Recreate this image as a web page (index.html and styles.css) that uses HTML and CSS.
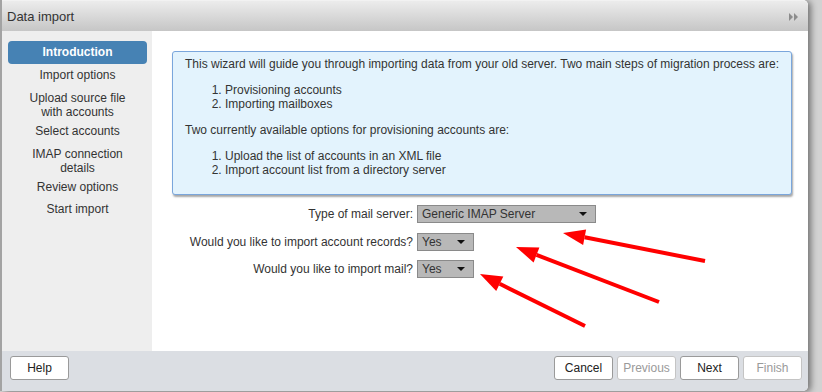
FILE: index.html
```html
<!DOCTYPE html>
<html>
<head>
<meta charset="utf-8">
<title>Data import</title>
<link rel="stylesheet" href="styles.css">
</head>
<body>
<div class="dialog">
  <div class="header">
    <span class="title">Data import</span>
    <svg class="collapse" width="9" height="8" viewBox="0 0 9 8"><path d="M0 0 L4 4 L0 8 Z M5 0 L9 4 L5 8 Z" fill="#8c8c8c"/></svg>
  </div>
  <div class="body">
    <nav class="steps">
      <div class="step active">Introduction</div>
      <div class="step">Import options</div>
      <div class="step two">Upload source file<br>with accounts</div>
      <div class="step">Select accounts</div>
      <div class="step two">IMAP connection<br>details</div>
      <div class="step">Review options</div>
      <div class="step">Start import</div>
    </nav>
    <main class="content">
      <div class="info">
        <p class="lead">This wizard will guide you through importing data from your old server. Two main steps of migration process are:</p>
        <ol>
          <li>Provisioning accounts</li>
          <li>Importing mailboxes</li>
        </ol>
        <p>Two currently available options for provisioning accounts are:</p>
        <ol>
          <li>Upload the list of accounts in an XML file</li>
          <li>Import account list from a directory server</li>
        </ol>
      </div>
      <div class="form">
        <label class="lbl">Type of mail server:</label>
        <div class="select wide"><span>Generic IMAP Server</span><i class="caret"></i></div>
        <label class="lbl">Would you like to import account records?</label>
        <div class="select small"><span>Yes</span><i class="caret"></i></div>
        <label class="lbl">Would you like to import mail?</label>
        <div class="select small"><span>Yes</span><i class="caret"></i></div>
      </div>
    </main>
  </div>
  <div class="footer">
    <button class="btn">Help</button>
    <div class="nav-btns">
      <button class="btn">Cancel</button>
      <button class="btn" disabled>Previous</button>
      <button class="btn">Next</button>
      <button class="btn" disabled>Finish</button>
    </div>
  </div>
</div>
<svg class="arrows" width="822" height="392" viewBox="0 0 822 392">
  <g stroke="#ff0000" stroke-width="4" fill="none">
    <line x1="705" y1="261" x2="584.6" y2="237.3"/>
    <line x1="659" y1="302" x2="536.5" y2="254.9"/>
    <line x1="585" y1="326" x2="499.7" y2="283.8"/>
  </g>
  <g fill="#ff0000">
    <polygon points="563,233 586.1,229.4 583.1,245.1"/>
    <polygon points="516,247 539.4,247.4 533.6,262.4"/>
    <polygon points="480,274 503.3,276.6 496.2,291"/>
  </g>
</svg>
</body>
</html>
```
FILE: styles.css
```css
html, body {
  margin: 0;
  padding: 0;
}
body {
  width: 822px;
  height: 392px;
  overflow: hidden;
  background: #d2d2d2;
  font-family: "Liberation Sans", Arial, sans-serif;
  font-size: 12px;
  color: #333;
  position: relative;
}
.dialog {
  margin-left: 2px;
  width: 806px;
  height: 391px;
  background: #fff;
  border-radius: 0 5px 5px 0;
  box-shadow: -2px 0 0 #a3a3a3, 3px 1px 6px rgba(0,0,0,0.45);
  display: flex;
  flex-direction: column;
  overflow: hidden;
}
.header {
  height: 31px;
  flex: none;
  box-sizing: border-box;
  background: linear-gradient(#ececec, #c6c6c6);
  border-top: 1px solid #f2f2f2;
  display: flex;
  align-items: center;
  justify-content: space-between;
  padding: 0 10px 0 5px;
  border-radius: 0 5px 0 0;
}
.title {
  font-size: 13px;
  color: #333;
}
.collapse {
  margin-top: 2px;
}
.body {
  display: flex;
  height: 320px;
  flex: none;
}
.steps {
  width: 150px;
  flex: none;
  background: #eeeeee;
  padding-top: 10px;
  box-sizing: border-box;
}
.step {
  margin: 0 5px 0 6px;
  padding: 4px 0;
  line-height: 14px;
  text-align: center;
  color: #333;
}
.step.two {
  padding: 5px 0 1px;
}
.step.active {
  background: #4682b4;
  color: #fff;
  font-weight: bold;
  border-radius: 4px;
  padding: 4px 0 5px;
}
.content {
  flex: 1;
  padding: 20px 16px 0 20px;
}
.info {
  background: #e3f3fd;
  border: 1px solid #7aa6dc;
  border-radius: 3px;
  box-shadow: 1px 2px 2px rgba(0,0,0,0.35);
  padding: 5px 4px 5px 12px;
  line-height: 14px;
  color: #333;
}
.info p {
  margin: 0;
  white-space: nowrap;
}
.info ol {
  margin: 12px 0;
  padding-left: 40px;
}
.form {
  display: grid;
  grid-template-columns: 241px auto;
  column-gap: 4px;
  row-gap: 9.5px;
  margin-top: 10px;
  justify-items: start;
  align-items: center;
}
.lbl {
  justify-self: end;
  color: #333;
  white-space: nowrap;
}
.select {
  height: 18px;
  box-sizing: border-box;
  background: #b8b8b8;
  border: 1px solid #8a8a8a;
  display: flex;
  align-items: center;
  justify-content: space-between;
  padding: 0 8px 0 4px;
  color: #333;
}
.select.wide {
  width: 179px;
}
.select.small {
  width: 57px;
}
.caret {
  width: 0;
  height: 0;
  border-left: 4px solid transparent;
  border-right: 4px solid transparent;
  border-top: 4px solid #111;
}
.footer {
  height: 40px;
  flex: none;
  background: #dbdee3;
  display: flex;
  justify-content: space-between;
  padding: 5px 6px 0 8px;
  box-sizing: border-box;
}
.nav-btns {
  display: flex;
  gap: 4px;
}
.btn {
  width: 59px;
  height: 24px;
  background: #fff;
  border: 1px solid #9a9a9a;
  border-radius: 3px;
  font-family: "Liberation Sans", Arial, sans-serif;
  font-size: 12px;
  color: #222;
  padding: 0;
}
.btn:disabled {
  color: #9a9a9a;
  border-color: #c4c4c4;
}
.arrows {
  position: absolute;
  left: 0;
  top: 0;
  pointer-events: none;
}
```
